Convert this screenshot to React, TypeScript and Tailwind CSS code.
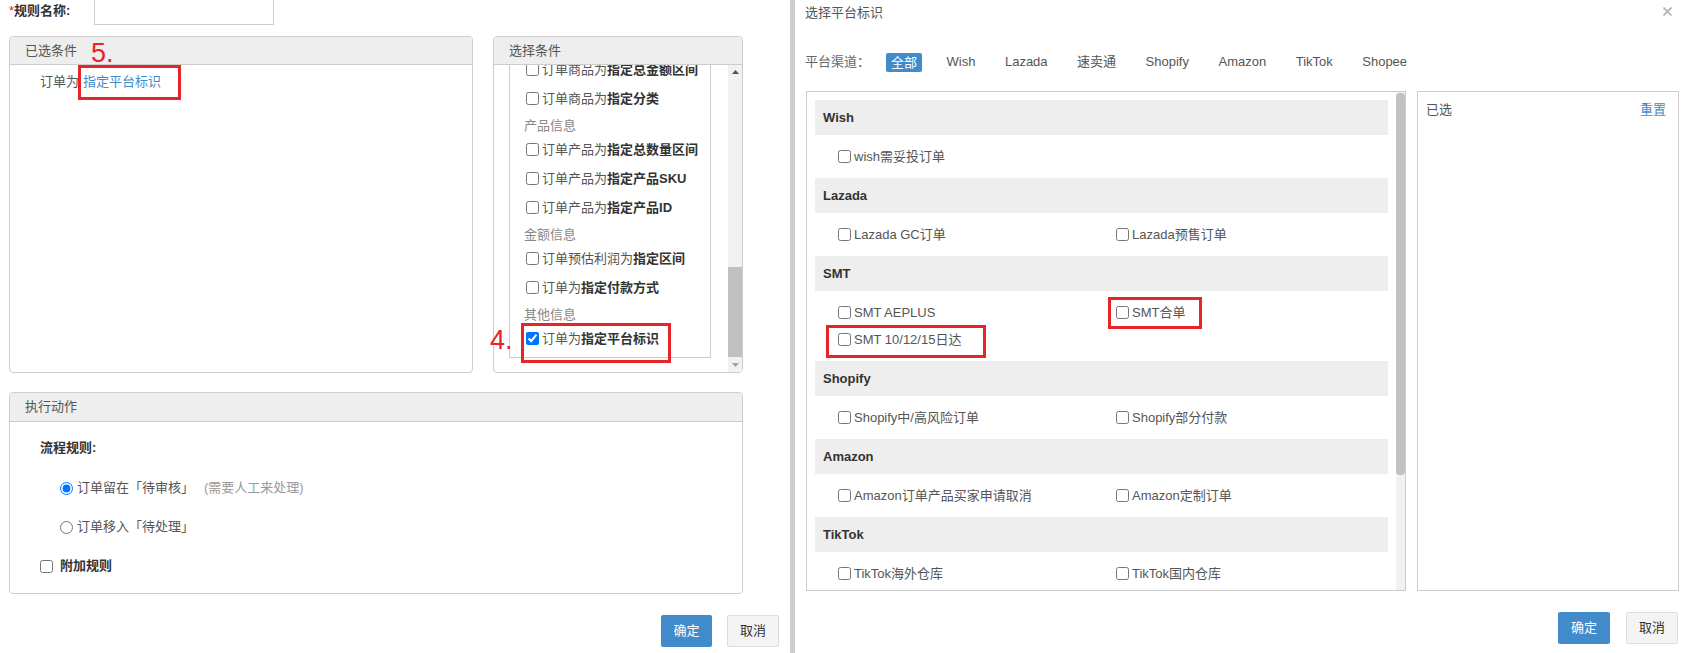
import React from "react";

const RED = "border-[3px] border-[#e8242b]";

function Check({ checked }: { checked?: boolean }) {
  return (
    <input
      type="checkbox"
      defaultChecked={checked}
      className="m-0 h-[13px] w-[13px] shrink-0"
    />
  );
}

function CondItem({ pre, bold }: { pre: string; bold: string }) {
  return (
    <div className="flex h-[29px] items-center gap-[3px] pl-[2px] whitespace-nowrap">
      <Check checked={pre === "订单为" && bold === "指定平台标识"} />
      <span className="text-[#555]">
        {pre}
        <b className="font-bold text-[#333]">{bold}</b>
      </span>
    </div>
  );
}

function CondLabel({ text }: { text: string }) {
  return (
    <div className="flex h-[22px] items-center text-[#888]">
      <span className="relative top-[2px]">{text}</span>
    </div>
  );
}

type Opt = { label: string; mark?: "a" | "b" };

const sections: { name: string; items: Opt[] }[] = [
  { name: "Wish", items: [{ label: "wish需妥投订单" }] },
  { name: "Lazada", items: [{ label: "Lazada GC订单" }, { label: "Lazada预售订单" }] },
  {
    name: "SMT",
    items: [
      { label: "SMT AEPLUS" },
      { label: "SMT合单", mark: "a" },
      { label: "SMT 10/12/15日达", mark: "b" },
    ],
  },
  { name: "Shopify", items: [{ label: "Shopify中/高风险订单" }, { label: "Shopify部分付款" }] },
  { name: "Amazon", items: [{ label: "Amazon订单产品买家申请取消" }, { label: "Amazon定制订单" }] },
  { name: "TikTok", items: [{ label: "TikTok海外仓库" }, { label: "TikTok国内仓库" }] },
  { name: "Shopee", items: [{ label: "Shopee预售订单" }] },
];

const channels = ["Wish", "Lazada", "速卖通", "Shopify", "Amazon", "TikTok", "Shopee"];

export default function App() {
  return (
    <div className="flex h-[653px] w-[1682px] overflow-hidden bg-white font-['Liberation_Sans','Noto_Sans_CJK_SC',sans-serif] text-[13px] leading-[20px] text-[#555]">
      {/* page behind the dialog */}
      <div className="w-[790px] shrink-0">
        <div className="flex h-[25px]">
          <div className="w-[94px] pl-[9px] pt-[1px] font-bold text-[#333]">
            <span className="font-normal text-[#e8242b]">*</span>规则名称:
          </div>
          <div className="h-[25px] w-[180px] border border-t-0 border-[#ccc]" />
        </div>

        <div className="mt-[11px] flex gap-[20px] pl-[9px]">
          {/* 已选条件 */}
          <div className="relative h-[337px] w-[464px] rounded-[4px] border border-[#ccc]">
            <div className="flex h-[28px] items-center rounded-t-[3px] border-b border-[#ccc] bg-[#eee] pl-[15px]">
              已选条件
            </div>
            <div className="pl-[30px] pt-[7px]">
              订单为<span className="ml-[4px] text-[#428bca]">指定平台标识</span>
            </div>
            <div className={`absolute left-[68px] top-[28px] h-[35px] w-[103px] ${RED}`} />
            <div className="absolute left-[81px] top-[3px] text-[27px] leading-[27px] text-[#e8242b]">5.</div>
          </div>

          {/* 选择条件 */}
          <div className="relative h-[337px] w-[250px] rounded-[4px] border border-[#ccc]">
            <div className="flex h-[28px] items-center rounded-t-[3px] border-b border-[#ccc] bg-[#eee] pl-[15px]">
              选择条件
            </div>
            <div className="flex h-[307px]">
              <div className="flex flex-1 flex-col justify-end overflow-hidden pb-[14px] pl-[15px] pr-[17px]">
                <div className="shrink-0 border border-[#ccc] pb-[4px] pl-[14px]">
                  <CondLabel text="订单信息" />
                  <CondItem pre="订单为" bold="指定店铺" />
                  <CondItem pre="订单商品为" bold="指定总金额区间" />
                  <CondItem pre="订单商品为" bold="指定分类" />
                  <CondLabel text="产品信息" />
                  <CondItem pre="订单产品为" bold="指定总数量区间" />
                  <CondItem pre="订单产品为" bold="指定产品SKU" />
                  <CondItem pre="订单产品为" bold="指定产品ID" />
                  <CondLabel text="金额信息" />
                  <CondItem pre="订单预估利润为" bold="指定区间" />
                  <CondItem pre="订单为" bold="指定付款方式" />
                  <CondLabel text="其他信息" />
                  <CondItem pre="订单为" bold="指定平台标识" />
                </div>
              </div>
              {/* scrollbar */}
              <div className="flex w-[14px] flex-col bg-[#f1f1f1]">
                <div className="flex h-[14px] items-center justify-center">
                  <svg width="7" height="4" viewBox="0 0 7 4">
                    <path d="M0 4 L3.5 0 L7 4 Z" fill="#505050" />
                  </svg>
                </div>
                <div className="flex flex-1 flex-col justify-end pb-[1px]">
                  <div className="h-[90px] bg-[#c1c1c1]" />
                </div>
                <div className="flex h-[14px] items-center justify-center">
                  <svg width="7" height="4" viewBox="0 0 7 4">
                    <path d="M0 0 L3.5 4 L7 0 Z" fill="#a3a3a3" />
                  </svg>
                </div>
              </div>
            </div>
            <div className={`absolute left-[27px] top-[286px] h-[40px] w-[150px] ${RED}`} />
            <div className="absolute left-[-4px] top-[290px] text-[27px] leading-[27px] text-[#e8242b]">4.</div>
          </div>
        </div>

        {/* 执行动作 */}
        <div className="ml-[9px] mt-[19px] h-[202px] w-[734px] rounded-[4px] border border-[#ccc]">
          <div className="flex h-[29px] items-center rounded-t-[3px] border-b border-[#ccc] bg-[#eee] pl-[15px]">
            执行动作
          </div>
          <div className="pl-[30px] pt-[16px]">
            <div className="font-bold text-[#333]">流程规则:</div>
            <div className="ml-[20px] mt-[20px] flex items-center gap-[4px]">
              <input type="radio" name="flow" defaultChecked className="m-0 h-[13px] w-[13px]" />
              <span>订单留在「待审核」</span>
              <span className="ml-[6px] text-[#999]">(需要人工来处理)</span>
            </div>
            <div className="ml-[20px] mt-[19px] flex items-center gap-[4px]">
              <input type="radio" name="flow" className="m-0 h-[13px] w-[13px]" />
              <span>订单移入「待处理」</span>
            </div>
            <div className="mt-[19px] flex items-center gap-[7px]">
              <Check />
              <span className="font-bold text-[#333]">附加规则</span>
            </div>
          </div>
        </div>

        <div className="mt-[21px] flex justify-end gap-[15px] pr-[11px]">
          <button className="h-[32px] w-[51px] rounded-[2px] bg-[#428bca] text-white">确定</button>
          <button className="h-[32px] w-[52px] rounded-[2px] border border-[#ddd] bg-[#f4f4f4] text-[#333]">取消</button>
        </div>
      </div>

      <div className="w-[5px] shrink-0 bg-[#cdcdcd]" />

      {/* dialog */}
      <div className="relative flex flex-1 flex-col pl-[10px] pr-[4px]">
        <div className="flex h-[26px] items-center text-[#555]">选择平台标识</div>
        <svg className="absolute right-[11px] top-[7px]" width="9" height="9" viewBox="0 0 9 9">
          <path d="M0.5 0.5 L8.5 8.5 M8.5 0.5 L0.5 8.5" stroke="#b5b5b5" strokeWidth="1.8" />
        </svg>

        <div className="mt-[24px] flex h-[24px] items-center">
          <span className="text-[#666]">平台渠道：</span>
          <div className="ml-[16px] flex items-center gap-[19.5px]">
            <span className="rounded-[2px] bg-[#428bca] px-[5px] leading-[19px] text-white">全部</span>
            {channels.map((c) => (
              <span key={c} className="px-[5px] text-[#555]">
                {c}
              </span>
            ))}
          </div>
        </div>

        <div className="ml-[1px] mt-[17px] flex gap-[11px]">
          <div className="flex h-[500px] w-[600px] border border-[#ccc]">
            <div className="flex-1 overflow-hidden px-[8px] pt-[8px]">
              {sections.map((s) => (
                <div key={s.name}>
                  <div className="flex h-[35px] items-center bg-[#eee] pl-[8px] font-bold text-[#333]">{s.name}</div>
                  <div className="grid grid-cols-[278px_278px] py-[8px] pl-[23px]">
                    {s.items.map((it) => (
                      <div key={it.label} className="relative flex h-[27px] items-center gap-[3px] whitespace-nowrap">
                        <Check />
                        <span>{it.label}</span>
                        {it.mark === "a" && (
                          <div className={`absolute left-[-8px] top-[-2px] h-[32px] w-[94px] ${RED}`} />
                        )}
                        {it.mark === "b" && (
                          <div className={`absolute left-[-12px] top-[-1px] h-[33px] w-[160px] ${RED}`} />
                        )}
                      </div>
                    ))}
                  </div>
                </div>
              ))}
            </div>
            <div className="w-[9px] bg-[#f1f1f1] pt-[1px]">
              <div className="h-[382px] rounded-[4px] bg-[#c1c1c1]" />
            </div>
          </div>

          <div className="flex h-[500px] w-[262px] justify-between border border-[#ccc] pl-[8px] pr-[12px] pt-[8px]">
            <span>已选</span>
            <span className="h-[20px] text-[#428bca]">重置</span>
          </div>
        </div>

        <div className="mt-[21px] flex justify-end gap-[16px] pr-[1px]">
          <button className="h-[32px] w-[52px] rounded-[2px] bg-[#428bca] text-white">确定</button>
          <button className="h-[32px] w-[52px] rounded-[2px] border border-[#ddd] bg-[#f4f4f4] text-[#333]">取消</button>
        </div>
      </div>
    </div>
  );
}
